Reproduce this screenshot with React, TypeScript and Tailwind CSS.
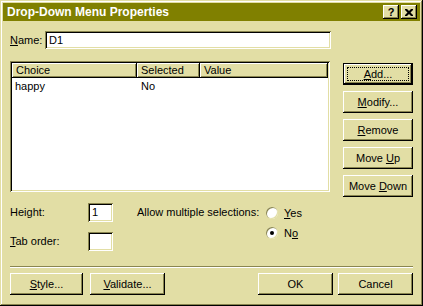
import React from "react";

const FACE = "bg-[#e2dea5]";
const raised =
  "shadow-[inset_-1px_-1px_0_#000,inset_1px_1px_0_#fff,inset_-2px_-2px_0_#8a8650,inset_2px_2px_0_#e2dea5]";
const sunken =
  "shadow-[inset_1px_1px_0_#8a8650,inset_-1px_-1px_0_#fff,inset_2px_2px_0_#000,inset_-2px_-2px_0_#e2dea5]";

function Btn({
  children,
  w,
  def,
}: {
  children: React.ReactNode;
  w: string;
  def?: boolean;
}) {
  if (def) {
    return (
      <div className={`${w} h-[22px] border border-black ${FACE}`}>
        <div
          className={`w-full h-full ${raised} flex items-center justify-center p-[3px]`}
        >
          <div className="w-full h-full border border-dotted border-black flex items-center justify-center">
            {children}
          </div>
        </div>
      </div>
    );
  }
  return (
    <div
      className={`${w} h-[22px] ${FACE} ${raised} flex items-center justify-center`}
    >
      {children}
    </div>
  );
}

function Radio({ checked }: { checked?: boolean }) {
  return (
    <div className="w-[12px] h-[12px] rounded-full bg-white shadow-[inset_1px_1px_0_#8a8650,inset_-1px_-1px_0_#e2dea5] flex items-center justify-center">
      {checked && <div className="w-[4px] h-[4px] rounded-full bg-black" />}
    </div>
  );
}

export default function App() {
  return (
    <div
      className={`w-[423px] h-[306px] ${FACE} p-[3px] flex flex-col text-black text-[11px] leading-none shadow-[inset_-1px_-1px_0_#000,inset_1px_1px_0_#e2dea5,inset_-2px_-2px_0_#8a8650,inset_2px_2px_0_#fff]`}
      style={{ fontFamily: '"Liberation Sans", Arial, sans-serif' }}
    >
      {/* Title bar */}
      <div className="h-[18px] bg-[#808000] flex items-center pl-[4px] pr-[3px]">
        <div className="text-white font-bold text-[12px] flex-1">
          Drop-Down Menu Properties
        </div>
        <div className="flex gap-[2px]">
          <div
            className={`w-[16px] h-[14px] ${FACE} ${raised} flex items-center justify-center font-bold text-[11px]`}
          >
            ?
          </div>
          <div
            className={`w-[16px] h-[14px] ${FACE} ${raised} flex items-center justify-center`}
          >
            <svg width="8" height="7" viewBox="0 0 8 7">
              <path
                d="M0 0h2l2 2 2-2h2v1L5.5 3.5 8 6v1H6L4 5 2 7H0V6l2.5-2.5L0 1z"
                fill="#000"
              />
            </svg>
          </div>
        </div>
      </div>

      <div className="flex flex-col px-[7px]">
        {/* Name row */}
        <div className="mt-[10px] flex items-center h-[18px]">
          <div className="w-[35px]">
            <u>N</u>ame:
          </div>
          <div
            className={`w-[286px] h-[18px] bg-white ${sunken} flex items-center pl-[4px]`}
          >
            D1
          </div>
        </div>

        {/* List + buttons */}
        <div className="mt-[12px] flex items-start">
          <div className={`w-[320px] h-[131px] bg-white ${sunken} p-[2px]`}>
            <div className="flex h-[15px]">
              <div
                className={`w-[125px] ${FACE} ${raised} flex items-center pl-[4px]`}
              >
                Choice
              </div>
              <div
                className={`w-[63px] ${FACE} ${raised} flex items-center pl-[4px]`}
              >
                Selected
              </div>
              <div
                className={`flex-1 ${FACE} ${raised} flex items-center pl-[4px]`}
              >
                Value
              </div>
            </div>
            <div className="flex h-[17px] items-center">
              <div className="w-[125px] pl-[3px]">happy</div>
              <div className="w-[63px] pl-[4px]">No</div>
            </div>
          </div>
          <div className="ml-[13px] flex flex-col gap-[6px] pt-[2px]">
            <Btn w="w-[70px]" def>
              <span>
                <u>A</u>dd...
              </span>
            </Btn>
            <Btn w="w-[70px]">
              <span>
                <u>M</u>odify...
              </span>
            </Btn>
            <Btn w="w-[70px]">
              <span>
                <u>R</u>emove
              </span>
            </Btn>
            <Btn w="w-[70px]">
              <span>
                Move <u>U</u>p
              </span>
            </Btn>
            <Btn w="w-[70px]">
              <span>
                Move <u>D</u>own
              </span>
            </Btn>
          </div>
        </div>

        {/* Height / tab order / radios */}
        <div className="mt-[6px] flex">
          <div className="flex flex-col gap-[10px]">
            <div className="flex items-center h-[19px]">
              <div className="w-[78px]">
                Hei<u>g</u>ht:
              </div>
              <div
                className={`w-[25px] h-[19px] bg-white ${sunken} flex items-center pl-[4px]`}
              >
                1
              </div>
            </div>
            <div className="flex items-center h-[19px]">
              <div className="w-[78px]">
                <u>T</u>ab order:
              </div>
              <div className={`w-[25px] h-[19px] bg-white ${sunken}`} />
            </div>
          </div>
          <div className="ml-[24px] h-[19px] flex items-center w-[129px]">
            Allow multiple selections:
          </div>
          <div className="flex flex-col gap-[6px] pt-[3px]">
            <div className="flex items-center h-[14px] gap-[6px]">
              <Radio />
              <span>
                <u>Y</u>es
              </span>
            </div>
            <div className="flex items-center h-[14px] gap-[6px]">
              <Radio checked />
              <span>
                N<u>o</u>
              </span>
            </div>
          </div>
        </div>

        {/* Separator */}
        <div className="mt-[15px] h-[2px] border-t border-[#8a8650] border-b border-b-white" />

        {/* Bottom buttons */}
        <div className="mt-[5px] flex justify-between">
          <div className="flex gap-[7px]">
            <Btn w="w-[73px]">
              <span>
                <u>S</u>tyle...
              </span>
            </Btn>
            <Btn w="w-[75px]">
              <span>
                <u>V</u>alidate...
              </span>
            </Btn>
          </div>
          <div className="flex gap-[5px]">
            <Btn w="w-[75px]">OK</Btn>
            <Btn w="w-[75px]">Cancel</Btn>
          </div>
        </div>
      </div>
    </div>
  );
}
